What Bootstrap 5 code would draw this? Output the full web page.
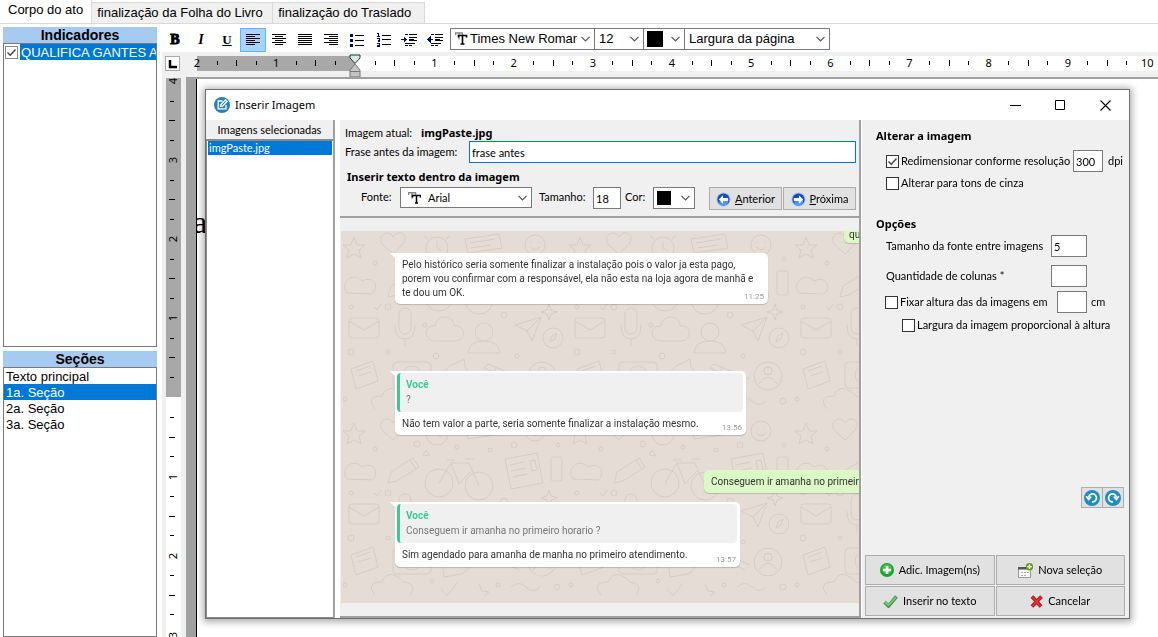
<!DOCTYPE html>
<html lang="pt-BR">
<head>
<meta charset="utf-8">
<meta name="viewport" content="width=device-width, initial-scale=1">
<title>Inserir Imagem</title>
<link href="https://cdn.jsdelivr.net/npm/bootstrap@5.3.0/dist/css/bootstrap.min.css" rel="stylesheet">
<style>
:root{--face:#f0f0f0;--edge:#7a7a7a;--sel:#0078d7;--head:#a6caf0}
body{font:13px/16px "Liberation Sans",Arial,sans-serif;color:#000;background:#fff}
.app{height:100vh;min-height:560px}
.tabs{height:24px;border-bottom:1px solid #d9d9d9}
.tabs .doc-tab{font-size:13px;line-height:16px;color:#000;background:var(--face);border:1px solid #d9d9d9;border-left-width:0;border-bottom:0;border-radius:0;padding:2px 5px;height:21px}
.tabs .doc-tab.active{background:#fff;height:24px;border-color:transparent #d9d9d9 transparent transparent;padding:2px 8px 6px;color:#000}
.side{width:158px;padding:3px 1px 0 3px}
.side h2{font-size:14px;line-height:16px;font-weight:700;margin:0;background:var(--head);text-align:center}
.box{border:1px solid var(--edge);background:#fff}
.row-item{height:16px;line-height:17px;padding:0 2px;white-space:nowrap;overflow:hidden}
.picked{background:var(--sel);color:#fff}
.tick{appearance:none;width:13px;height:13px;flex:none;margin:0;border:1px solid #333;background:#fff}
.tick:checked{background:#fff url("data:image/svg+xml,%3Csvg xmlns='http://www.w3.org/2000/svg' viewBox='0 0 11 11'%3E%3Cpath d='M1.5 5.5 4.2 8.2 9.5 2.5' fill='none' stroke='%23444' stroke-width='1.4'/%3E%3C/svg%3E")}
.toolbar{height:28px;padding-top:4px}
.tool{width:26px;height:24px;padding:0;border:1px solid transparent;background:none;display:flex;align-items:center;justify-content:center}
.tool.on{background:#a5d4ff;border-color:#66b3f0}
.combo{border:1px solid var(--edge);background:#fff;height:22px;overflow:hidden}
.combo select{appearance:none;border:0;background:none;padding:0;min-width:0;flex:1 1 0;color:#000;font:inherit;outline:0}
.combo .chev{flex:none;width:9px;height:6px;margin:0 4px 0 4px;pointer-events:none}
.swatch{width:16px;height:16px;background:#000;flex:none;margin-left:3px}
.digits{font:11px/14px "Noto Sans",sans-serif}
.h-ruler{height:25px;background:var(--face);padding-top:4px;overflow:hidden}
.corner{width:15px;height:15px;border:1px solid #aaa;background:#fff;margin:0 17px 0 3px}
.scale{flex:none;width:950px;height:15px;display:grid;grid-template-columns:repeat(12,1fr)}
.scale>span,.v-scale>span{display:flex;background-repeat:no-repeat}
.scale>span{background-image:linear-gradient(#000,#000),linear-gradient(#000,#000),linear-gradient(#000,#000);background-size:1px 4px,1px 6px,1px 4px;background-position:25% 5px,50% 4px,75% 5px}
.scale i,.v-scale i{font-style:normal;display:flex;justify-content:center;align-items:center;width:0;height:14px}
.h-track{background:linear-gradient(90deg,#a8a8a8 158px,#fff 158px);height:15px;min-width:0}
.handle{position:absolute;left:152px;top:-2px}
.v-ruler{width:24px;background:var(--face);padding:1px 0 0 4px;overflow:hidden}
.v-track{width:15px;background:linear-gradient(#a8a8a8 319px,#fff 319px);height:100%;padding-top:3px}
.v-scale{height:554px;display:grid;grid-template-rows:repeat(7,1fr)}
.v-scale>span{background-image:linear-gradient(#000,#000),linear-gradient(#000,#000),linear-gradient(#000,#000);background-size:4px 1px,6px 1px,4px 1px;background-position:4px 25%,3px 50%,4px 75%}
.v-scale i{width:15px;height:0;flex:none}
.v-scale b{font-weight:400;transform:rotate(-90deg)}
.desk{background:#a0a0a0;padding:2px 0 0 10px}
.sheet{background:#fff;border-left:1px solid #000;height:100%;overflow:hidden}
.sheet p{font:32px/32px "Liberation Serif",serif;margin:127px 0 0;text-indent:-4px}
.dialog-win{position:absolute;left:205px;right:28px;top:89px;bottom:18px;background:#fff;border:1px solid #6e6e6e;box-shadow:0 1px 7px 2px rgba(0,0,0,.33);font:11px/16px Lato,"Noto Sans",sans-serif}
.titlebar{height:30px;padding:0 18px 0 8px;font:11px/16px "Noto Sans",sans-serif}
.titlebar button{border:0;background:none;padding:0;width:11px;height:11px;display:flex}
.win-ctl{gap:34px}
.pick{width:129px;border-right:2px solid #a0a0a0;background:#fff}
.pick .cap{background:var(--face);height:19px;line-height:20px;text-align:center}
.pick .lst{border:1px solid #8a8a8a;border-top-width:2px;border-right:0;padding:0 1px}
.mid{background:var(--face);margin-left:5px;border-right:2px solid #a0a0a0;min-width:0}
.mid form{height:98px;padding:5px 3px 0 5px;border-bottom:2px solid #a0a0a0}
.sub{font:700 11px/16px "Noto Sans",sans-serif;margin:0}
.field{border:1px solid var(--edge);background:#fff;color:#000;padding:0 2px;height:22px;font:inherit;border-radius:0;outline:0;min-width:0}
.field.live{border-color:var(--sel)}
.push{border:1px solid #adadad;background:#e1e1e1;color:#000;font:inherit;border-radius:0;padding:0;display:flex;align-items:center;justify-content:center}
.nav-push{width:73px;height:23px;gap:4px;padding-top:1px}
.chat{background:#e5dcd5;margin:13px 0 0 1px;overflow:hidden;position:relative;font:10px/14px Roboto,"Noto Sans",sans-serif;color:#333}
.chat .doodle{position:absolute;inset:0;width:100%;height:100%}
.bubble{position:relative;background:#fff;border-radius:5px;margin-left:54px;box-shadow:0 1px 1px rgba(0,0,0,.18);padding:5px 7px}
.bubble:not(.out)::before{content:"";position:absolute;left:-5px;top:0;border:5px solid transparent;border-top-color:#fff;border-bottom:0;border-left-width:5px}
.bubble.out{background:#dcf8c6;white-space:nowrap;overflow:hidden;border-radius:5px 0 0 5px}
.bubble.quoted{padding:2px 3px 5px 2px}
.quote{background:#f0f0f0;border-left:3px solid #35cd96;border-radius:4px;height:39px;padding:4px 6px;color:#777;line-height:16px}
.quote strong{display:block;color:#35cd96;line-height:15px}
.bubble time{position:absolute;right:4px;bottom:1px;font-size:8px;line-height:12px;color:#999}
.opts{width:268px;background:var(--face);border-left:1px solid #fff;padding:8px 4px 2px 3px}
.opts .line{gap:2px}
.acts{display:grid;grid-template-columns:1fr 1fr;gap:1px}
.acts .push{height:30px;gap:5px}
.spin{width:22px;height:21px}
</style>
</head>
<body>
<div class="app d-flex flex-column position-relative overflow-hidden">
  <nav class="tabs d-flex align-items-end">
    <button class="doc-tab active" type="button">Corpo do ato</button>
    <button class="doc-tab text-start" type="button" style="width:181px">finalização da Folha do Livro</button>
    <button class="doc-tab text-start" type="button" style="width:152px">finalização do Traslado</button>
  </nav>
  <div class="d-flex flex-grow-1" style="min-height:0">
    <aside class="side d-flex flex-column flex-shrink-0">
      <h2>Indicadores</h2>
      <div class="box" style="height:304px">
        <label class="d-flex align-items-center" style="padding-left:1px">
          <input class="tick" type="checkbox" checked style="border-color:#888">
          <span class="row-item picked flex-fill px-0" style="margin-left:2px">&#8202;QUALIFICA GANTES A</span>
        </label>
      </div>
      <h2 style="margin-top:4px">Seções</h2>
      <div class="box flex-grow-1">
        <div class="row-item">Texto principal</div>
        <div class="row-item picked">1a. Seção</div>
        <div class="row-item">2a. Seção</div>
        <div class="row-item">3a. Seção</div>
      </div>
    </aside>
    <main class="d-flex flex-column flex-grow-1 ms-1" style="min-width:0">
      <div class="toolbar d-flex">
        <button class="tool" type="button" aria-label="Negrito"><b style="font:900 14px/16px 'Liberation Serif',serif;-webkit-text-stroke:1px #000">B</b></button>
        <button class="tool" type="button" aria-label="Itálico"><i style="font:italic 700 14px/16px 'Liberation Serif',serif">I</i></button>
        <button class="tool" type="button" aria-label="Sublinhado"><u style="font:700 13px/16px 'Liberation Serif',serif">U</u></button>
        <button class="tool on" type="button" aria-label="Esquerda"><svg width="14" height="12" shape-rendering="crispEdges"><path d="M0 .5h14M0 2.5h9M0 4.5h14M0 6.5h9M0 8.5h14M0 10.5h9" stroke="#000"/></svg></button>
        <button class="tool" type="button" aria-label="Centro"><svg width="14" height="12" shape-rendering="crispEdges"><path d="M0 .5h14M3 2.5h8M0 4.5h14M3 6.5h8M0 8.5h14M3 10.5h8" stroke="#000"/></svg></button>
        <button class="tool" type="button" aria-label="Justificar"><svg width="14" height="12" shape-rendering="crispEdges"><path d="M0 .5h14M0 2.5h14M0 4.5h14M0 6.5h14M0 8.5h14M0 10.5h14" stroke="#000"/></svg></button>
        <button class="tool" type="button" aria-label="Direita"><svg width="14" height="12" shape-rendering="crispEdges"><path d="M0 .5h14M5 2.5h9M0 4.5h14M5 6.5h9M0 8.5h14M5 10.5h9" stroke="#000"/></svg></button>
        <button class="tool" type="button" aria-label="Marcadores"><svg width="14" height="13" shape-rendering="crispEdges"><path d="M5 1.5h9M5 6.5h9M5 11.5h9" stroke="#000"/><path d="M0 0h3v3H0zM0 5h3v3H0zM0 10h3v3H0z" fill="#000080"/></svg></button>
        <button class="tool" type="button" aria-label="Numeração"><svg width="15" height="14" shape-rendering="crispEdges"><path d="M6 2.5h9M6 6.5h9M6 11.5h9" stroke="#000"/><path d="M1 .5h1.500v3M1 3.500h3M1 5.500h2v1.500h-1v1.500h2M1 10.500h2v3h-2M1 12h2" fill="none" stroke="#000080"/></svg></button>
        <button class="tool" type="button" aria-label="Aumentar recuo"><svg width="16" height="14" shape-rendering="crispEdges"><path d="M4 1.500h3M8 1.500h8M8 7.500h8M4 10.500h10M4 12.500h3M8 12.500h3" stroke="#000"/><path d="M8 4h8M8 6h5" stroke="#000" stroke-width="1"/><path d="M0 6h3V3l3 3.500L3 10V7H0z" fill="#000080"/></svg></button>
        <button class="tool" type="button" aria-label="Diminuir recuo"><svg width="16" height="14" shape-rendering="crispEdges"><path d="M4 1.500h3M8 1.500h8M8 7.500h8M4 10.500h10M4 12.500h3M8 12.500h3" stroke="#000"/><path d="M8 4h8M8 6h5" stroke="#000" stroke-width="1"/><path d="M6 6H4V3L0 6.500 4 10V7h2z" fill="#000080"/></svg></button>
        <div class="combo d-flex align-items-center" style="width:145px;margin-left:2px">
          <svg class="ms-1 flex-shrink-0" width="13" height="14"><path d="M.5 3V1h7v2M4 1v6.500" fill="none" stroke="#888" stroke-width="1.300"/><path d="M3.500 5.500V3.500h8v2M7.500 3.500v8M5.500 12h4" fill="none" stroke="#000" stroke-width="1.600"/></svg>
          <select aria-label="Fonte" style="margin-left:2px"><option>Times New Roman</option></select>
          <svg class="chev" viewBox="0 0 9 6"><path d="m.5.8 4 4 4-4" fill="none" stroke="#555" stroke-width="1.200"/></svg>
        </div>
        <div class="combo d-flex align-items-center" style="width:50px;margin-left:-1px">
          <select class="ps-1" aria-label="Tamanho"><option>12</option></select>
          <svg class="chev" viewBox="0 0 9 6"><path d="m.5.8 4 4 4-4" fill="none" stroke="#555" stroke-width="1.200"/></svg>
        </div>
        <div class="combo d-flex align-items-center" style="width:42px;margin-left:-1px">
          <span class="swatch"></span><select aria-label="Cor"><option></option></select>
          <svg class="chev" viewBox="0 0 9 6"><path d="m.5.8 4 4 4-4" fill="none" stroke="#555" stroke-width="1.200"/></svg>
        </div>
        <div class="combo d-flex align-items-center" style="width:146px;margin-left:-1px">
          <select class="ps-1" aria-label="Zoom"><option>Largura da página</option></select>
          <svg class="chev" viewBox="0 0 9 6"><path d="m.5.8 4 4 4-4" fill="none" stroke="#555" stroke-width="1.200"/></svg>
        </div>
      </div>
      <div class="h-ruler d-flex digits flex-shrink-0">
        <div class="corner flex-shrink-0"><svg class="d-block" width="13" height="13"><path d="M4 3v7h7" fill="none" stroke="#000" stroke-width="2.500"/></svg></div>
        <div class="h-track flex-fill position-relative">
          <div class="scale"><span><i>2</i></span><span><i>1</i></span><span></span><span><i>1</i></span><span><i>2</i></span><span><i>3</i></span><span><i>4</i></span><span><i>5</i></span><span><i>6</i></span><span><i>7</i></span><span><i>8</i></span><span><i>9</i></span></div>
          <span class="position-absolute top-0" style="left:944px">10</span>
          <svg class="handle" width="12" height="24"><path d="M1 1h10v3L6 9.500 1 4z" fill="#d6ecd9" stroke="#234"/><path d="M6 10l5 6v7H1v-7zM1 17.500h10" fill="#c4c4c4" stroke="#777"/></svg>
        </div>
      </div>
      <div class="d-flex flex-grow-1" style="min-height:0">
        <div class="v-ruler digits flex-shrink-0"><div class="v-track"><div class="v-scale"><span><i><b>4</b></i></span><span><i><b>3</b></i></span><span><i><b>2</b></i></span><span><i><b>1</b></i></span><span></span><span><i><b>1</b></i></span><span><i><b>2</b></i></span><span style="height:0"><i><b>3</b></i></span></div></div></div>
        <div class="desk flex-fill" style="min-width:0"><div class="sheet"><p>a</p></div></div>
      </div>
    </main>
  </div>

  <section class="dialog-win d-flex flex-column" role="dialog" aria-label="Inserir Imagem">
    <header class="titlebar d-flex align-items-center flex-shrink-0">
      <svg width="16" height="16" viewBox="0 0 16 16"><circle cx="8" cy="8" r="8" fill="#2780b9"/><path d="M8.500 4H4.200v7.800H12V8M6.500 9.500l.4-2L11.500 3l1.600 1.500L8.500 9.200z" fill="none" stroke="#fff" stroke-width="1.300"/></svg>
      <span style="margin-left:5px">Inserir Imagem</span>
      <div class="win-ctl d-flex ms-auto">
        <button type="button" aria-label="Minimizar"><svg width="11" height="11"><path d="M0 5.500h11" stroke="#000"/></svg></button>
        <button type="button" aria-label="Maximizar"><svg width="11" height="11"><path d="M.5.5h9v9h-9z" fill="none" stroke="#000"/></svg></button>
        <button type="button" aria-label="Fechar"><svg width="11" height="11"><path d="m.5.5 10 10m0-10-10 10" stroke="#000" stroke-width="1.100"/></svg></button>
      </div>
    </header>
    <div class="d-flex flex-grow-1" style="min-height:0">
      <div class="pick d-flex flex-column flex-shrink-0">
        <div class="cap">Imagens selecionadas</div>
        <div class="lst flex-grow-1"><div class="picked" style="height:14px;line-height:13px;padding-left:1px">imgPaste.jpg</div></div>
      </div>
      <div class="mid d-flex flex-column flex-grow-1">
        <form class="flex-shrink-0">
          <div>Imagem atual: <b class="sub" style="margin-left:6px">imgPaste.jpg</b></div>
          <div class="d-flex align-items-center">
            <label for="frase" style="width:124px">Frase antes da imagem:</label>
            <input class="field live flex-fill" id="frase" value="frase antes">
          </div>
          <h3 class="sub" style="margin:6px 0 2px 2px">Inserir texto dentro da imagem</h3>
          <div class="d-flex align-items-start" style="padding-left:16px">
            <label for="fonte" style="width:39px;line-height:20px">Fonte:</label>
            <div class="combo d-flex align-items-center" style="width:132px;height:21px">
              <svg class="flex-shrink-0" style="margin:0 7px" width="13" height="12"><path d="M.5 3V.7h7V3M4 .7v6" fill="none" stroke="#888" stroke-width="1.400"/><path d="M4.500 5.500V3.500h8v2M8.500 3.500v7M7 11h3" fill="none" stroke="#000" stroke-width="1.500"/></svg>
              <select id="fonte"><option>Arial</option></select>
              <svg class="chev" viewBox="0 0 9 6"><path d="m.5.8 4 4 4-4" fill="none" stroke="#555" stroke-width="1.200"/></svg>
            </div>
            <label for="tam" style="width:54px;margin-left:7px;line-height:20px">Tamanho:</label>
            <input class="field" id="tam" value="18" style="width:28px">
            <label for="cor" style="width:28px;margin-left:4px;line-height:20px">Cor:</label>
            <div class="combo d-flex align-items-center" style="width:42px"><span class="swatch" style="width:14px;height:14px"></span><select id="cor"><option></option></select>
              <svg class="chev" viewBox="0 0 9 6"><path d="m.5.8 4 4 4-4" fill="none" stroke="#555" stroke-width="1.200"/></svg></div>
            <button class="push nav-push ms-auto" type="button"><svg width="15" height="15" viewBox="0 0 16 16"><circle cx="8" cy="8" r="7.500" fill="#9fc4ee"/><circle cx="8" cy="8" r="6.500" fill="#1c49b8"/><path d="M13 8.500a5 5 0 0 1-10 2z" fill="#4f9bee"/><path d="M7.500 3.500 3 8l4.500 4.500V9.500H13v-3H7.500z" fill="#fff"/></svg><span><u>A</u>nterior</span></button>
            <button class="push nav-push" type="button" style="margin-left:1px"><svg width="15" height="15" viewBox="0 0 16 16"><circle cx="8" cy="8" r="7.500" fill="#9fc4ee"/><circle cx="8" cy="8" r="6.500" fill="#1c49b8"/><path d="M13 8.500a5 5 0 0 1-10 2z" fill="#4f9bee"/><path d="M8.500 3.500 13 8l-4.500 4.500V9.500H3v-3h5.500z" fill="#fff"/></svg><span><u>P</u>róxima</span></button>
          </div>
        </form>
        <div class="chat flex-grow-1 d-flex flex-column">
          <svg class="doodle" aria-hidden="true"><defs><pattern id="dd" width="226" height="186" patternUnits="userSpaceOnUse"><g fill="none" stroke="#d6ccc5" stroke-width="1">
            <path d="M10 14l3-8 3 8 8 0-6 5 2 8-7-4-7 4 2-8-6-5z"/><path d="M52 6c5-9 18-2 9 8l-9 9-10-9c-8-9 6-17 10-8z"/>
            <circle cx="96" cy="17" r="11"/><path d="M96 10v7l5 3M87 8l-4-3M105 8l4-3"/><path d="M124 8l34-5 3 14-34 5zM129 12l25-4M130 17l20-3"/>
            <circle cx="194" cy="14" r="10"/><path d="M189 16q5 5 10 0M190 11h1M197 11h1"/><path d="M6 62c-8-10 6-22 15-12 12-6 18 6 10 13z"/>
            <path d="M50 55l22-14 6 9-22 14-9 2zM69 43l6 9"/><circle cx="98" cy="66" r="14"/><circle cx="138" cy="69" r="14"/><path d="M98 66l12-20h18l10 23M110 46l8 21 12-13M106 43h8M124 42h9"/>
            <path d="M164 42l32-6 6 30-32 6zM169 48l14-3M170 54l15-3M172 60l14-3M189 44l5-1 2 10-5 1z"/><rect x="210" y="40" width="11" height="24" rx="2"/>
            <rect x="8" y="87" width="30" height="20" rx="3"/><path d="M8 90l15 9 15-9"/><path d="M58 83v14a6 6 0 0 0 12 0V83a6 6 0 0 0-12 0M54 94q0 14 10 14t10-14M64 108v7"/>
            <path d="M92 110c-10-3-9-16 2-15 2-14 20-10 19 0 12-2 12 14 2 15z"/><circle cx="143" cy="101" r="9"/><path d="M127 122q1-12 16-12t16 12z"/><path d="M174 94l26-8-9 24-5-10zM186 100l14-14"/>
            <circle cx="212" cy="107" r="10"/><path d="M209 111l2-6 5-3-2 6z"/><path d="M10 138l22-8 5 20-22 8zM15 140l14-5M17 145l13-4"/><rect x="52" y="131" width="38" height="26" rx="4"/><circle cx="71" cy="144" r="9"/><circle cx="71" cy="144" r="3"/>
            <path d="M103 160q-5-24 13-28l7-4 1 8q12 12-3 21zM112 144h1M120 143h1"/><path d="M143 137l35 16M147 133l36 15M143 137l4-4M155 137l-2 4M164 140l-2 5M173 145l-2 4"/><circle cx="201" cy="145" r="14"/><circle cx="201" cy="140" r="4"/><path d="M192 153q9-14 18 0"/>
            <path d="M34 178q-10-13 7-13 7-15 22 0 14 2 6 13"/><path d="M100 172l6 7 10-13M138 167l3 7 7 1-5 4M170 170q8-7 15 0t14 0"/><path d="M82 38l3-5 4 6zM33 76l3 3 4-6M206 79l2-6 2 6 6 2-6 2-2 6-2-6-6-2z"/>
            <circle cx="34" cy="32" r="2"/><circle cx="76" cy="27" r="3"/><circle cx="116" cy="30" r="2"/><circle cx="173" cy="28" r="3"/><circle cx="149" cy="33" r="2"/><circle cx="10" cy="76" r="2"/><circle cx="47" cy="76" r="3"/><circle cx="84" cy="94" r="2"/><circle cx="163" cy="84" r="3"/><circle cx="47" cy="121" r="2"/><circle cx="95" cy="125" r="3"/><circle cx="176" cy="125" r="2"/><circle cx="10" cy="121" r="3"/><circle cx="4" cy="168" r="2"/><circle cx="91" cy="164" r="2"/><circle cx="216" cy="170" r="3"/><circle cx="157" cy="168" r="2"/><circle cx="217" cy="28" r="2"/>
          </g></pattern></defs><rect width="100%" height="100%" fill="url(#dd)"/></svg>
          <div class="bubble out align-self-end flex-shrink-0" style="width:15px;height:12px;padding:0 5px;line-height:8px;border-radius:0 0 0 5px">qu</div>
          <div class="bubble flex-shrink-0" style="width:373px;height:51px;margin-top:10px">Pelo histórico seria somente finalizar a instalação pois o valor ja esta pago,<br>porem vou confirmar com a responsável, ela não esta na loja agora de manhã e<br>te dou um OK.<time>11:25</time></div>
          <div class="bubble quoted flex-shrink-0" style="width:351px;height:64px;margin-top:67px"><div class="quote"><strong>Você</strong>?</div><div style="padding:5px 5px">Não tem valor a parte, seria somente finalizar a instalação mesmo.</div><time>13:56</time></div>
          <div class="bubble out align-self-end flex-shrink-0" style="width:155px;height:23px;margin-top:35px">Conseguem ir amanha no primeiro</div>
          <div class="bubble quoted flex-shrink-0" style="width:345px;height:65px;margin-top:9px"><div class="quote"><strong>Você</strong>Conseguem ir amanha no primeiro horario ?</div><div style="padding:5px 5px">Sim agendado para amanha de manha no primeiro atendimento.</div><time>13:57</time></div>
        </div>
        <div style="height:13px" class="flex-shrink-0"></div>
        <div style="height:2px;background:#a0a0a0" class="flex-shrink-0"></div>
      </div>
      <div class="opts d-flex flex-column flex-shrink-0">
        <h3 class="sub" style="margin:0 0 6px 11px">Alterar a imagem</h3>
        <div class="line d-flex align-items-center" style="padding-left:21px"><input class="tick" type="checkbox" id="redim" checked><label for="redim" style="width:170px">Redimensionar conforme resolução</label><input class="field" aria-label="Resolução" value="300" style="width:30px;margin-right:3px"><span>dpi</span></div>
        <div class="line d-flex align-items-center" style="padding-left:21px;margin-top:3px"><input class="tick" type="checkbox" id="cinza"><label for="cinza">Alterar para tons de cinza</label></div>
        <h3 class="sub" style="margin:25px 0 3px 11px">Opções</h3>
        <div class="d-flex align-items-center" style="padding-left:21px"><label for="tfonte" style="width:165px">Tamanho da fonte entre imagens</label><input class="field" id="tfonte" value="5" style="width:36px"></div>
        <div class="d-flex align-items-center" style="padding-left:21px;margin-top:8px"><label for="cols" style="width:165px">Quantidade de colunas *</label><input class="field" id="cols" style="width:36px"></div>
        <div class="line d-flex align-items-center" style="padding-left:20px;margin-top:4px"><input class="tick" type="checkbox" id="fix"><label for="fix" style="width:155px">Fixar altura das da imagens em</label><input class="field" aria-label="Altura" style="width:30px;margin-right:2px"><span>cm</span></div>
        <div class="line d-flex align-items-center" style="padding-left:37px;margin-top:4px"><input class="tick" type="checkbox" id="larg"><label for="larg">Largura da imagem proporcional à altura</label></div>
        <div class="d-flex justify-content-end mt-auto" style="margin:0 1px 47px 0">
          <button class="push spin" type="button" aria-label="Girar à esquerda"><svg width="16" height="16"><circle cx="8" cy="8" r="8" fill="#1c8fc0"/><path d="M4.500 7.500a4 4 0 1 1 3.500 4.400M2.200 6.300l2.400 3.200 2.600-2.900" fill="none" stroke="#fff" stroke-width="1.700"/></svg></button>
          <button class="push spin" type="button" aria-label="Girar à direita" style="margin-left:-1px"><svg width="16" height="16"><circle cx="8" cy="8" r="8" fill="#1c8fc0"/><path d="M11.500 7.500A4 4 0 1 0 8 11.900M13.800 6.300l-2.400 3.200-2.600-2.900" fill="none" stroke="#fff" stroke-width="1.700"/></svg></button>
        </div>
        <div class="acts">
          <button class="push" type="button"><svg width="14" height="14"><circle cx="7" cy="7" r="7" fill="#18a52c"/><circle cx="7" cy="6" r="5" fill="#3cc04c"/><path d="M7 3v8M3 7h8" stroke="#fff" stroke-width="2.600"/></svg>Adic. Imagem(ns)</button>
          <button class="push" type="button"><svg width="15" height="15"><path d="M.5 4.500h12v10H.5z" fill="#f6f6f6" stroke="#999"/><path d="M0 4h9v2.500H0z" fill="#555"/><path d="M3 9.500h2m1 0h2m1 0h2m-8 3h2m1 0h2" stroke="#aab"/><circle cx="11.500" cy="3.700" r="3.700" fill="#6a9a10"/><path d="M11.500 1.500v4.400M9.300 3.700h4.400" stroke="#fff" stroke-width="1.500"/></svg>Nova seleção</button>
          <button class="push" type="button"><svg width="15" height="13"><path d="M1.500 7 5.500 11 13.500 1.500" fill="none" stroke="#3f9a46" stroke-width="3.600"/><path d="M2 7l3.500 3L13 2" fill="none" stroke="#7cc67c" stroke-width="1.800"/></svg>Inserir no texto</button>
          <button class="push" type="button"><svg width="13" height="13"><path d="m2 1.500 9 10M11.500 1.500l-9.500 10" stroke="#b81414" stroke-width="3.800"/><path d="m2.500 2 8 9M11 2l-8.500 9" stroke="#dc3a3a" stroke-width="1.600"/></svg>Cancelar</button>
        </div>
      </div>
    </div>
  </section>
</div>
<script src="https://cdn.jsdelivr.net/npm/bootstrap@5.3.0/dist/js/bootstrap.bundle.min.js"></script>
<script>
const phrase = document.getElementById('frase');
phrase.focus();
phrase.setSelectionRange(phrase.value.length, phrase.value.length);
</script>
</body>
</html>
